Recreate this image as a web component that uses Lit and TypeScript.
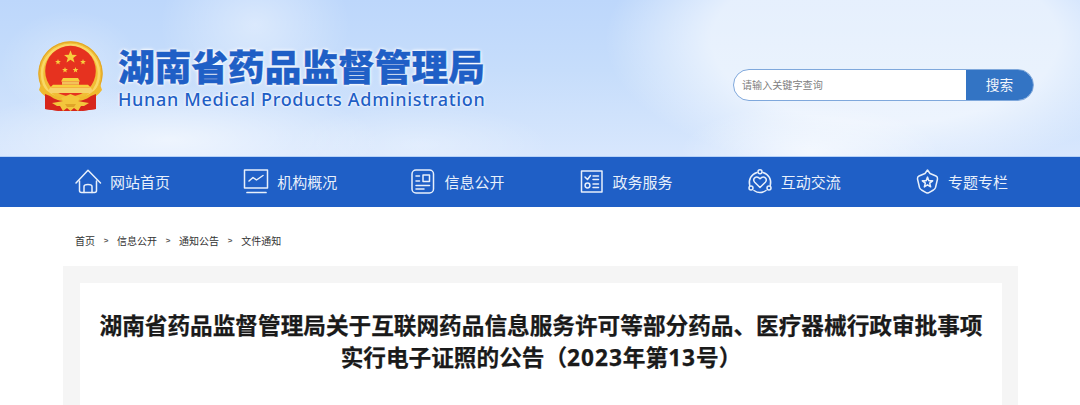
import { LitElement, html, css, svg } from "lit";
import { customElement } from "lit/decorators.js";

const star = (cx: number, cy: number, r: number, rot = 0) => {
  const pts: string[] = [];
  for (let i = 0; i < 10; i++) {
    const rad = i % 2 ? r * 0.42 : r;
    const a = ((-90 + rot + i * 36) * Math.PI) / 180;
    pts.push(`${(cx + rad * Math.cos(a)).toFixed(2)},${(cy + rad * Math.sin(a)).toFixed(2)}`);
  }
  return pts.join(" ");
};

const emblem = html`<svg class="emblem" viewBox="0 0 68 72" width="68" height="72">
  <path d="M8 50 L8 68 L23 70 L44 70 L59 68 L59 50 Z" fill="#d7261b"/>
  <circle cx="33.5" cy="32.5" r="32.2" fill="#f1bd35"/>
  <circle cx="33.5" cy="32.5" r="28.5" fill="none" stroke="#f9d866" stroke-width="2.5"/>
  <circle cx="33.5" cy="32.5" r="31.6" fill="none" stroke="#e0a428" stroke-width="1"/>
  <circle cx="33.5" cy="30" r="25.3" fill="#e6321f"/>
  <g fill="#f7cf3e">
    <polygon points="${star(33.5, 16, 6.8)}"/>
    <polygon points="${star(21, 21, 3)}"/>
    <polygon points="${star(46, 21, 3)}"/>
    <polygon points="${star(28, 29, 3)}"/>
    <polygon points="${star(38.5, 29, 3)}"/>
    <path d="M26 37 H41 L43 40.5 H24 Z"/>
    <rect x="25" y="40.5" width="17" height="3.2" fill="#f3c25a"/>
    <path d="M16 43.7 H51 L54 46.8 H13 Z"/>
    <path d="M13 46.8 H54 L57 52 H10 Z" fill="#f6d26a"/>
  </g>
  <path d="M4 43 C11 54 22 57 33.5 57 C45 57 56 54 63 43 L65 49 C58 59 46 61.5 33.5 61.5 C21 61.5 9 59 2 49 Z" fill="#efba2e"/>
  <path d="M8 53 L13 55 C18 59 24 60 27 60 L22 70 L8 68 Z" fill="#d7261b"/>
  <path d="M59 53 L54 55 C49 59 43 60 40 60 L45 70 L59 68 Z" fill="#d7261b"/>
  <path d="M24 57 L33.5 53 L43 57 L41 60 L46 61 L52 62 L47 65 L44 65 L41 70 L37 67 L33.5 70 L30 67 L26 70 L23 65 L20 65 L15 62 L21 61 L26 60 Z" fill="#f3c63c"/>
  <path d="M28 63 H39 L37 66 H30 Z" fill="#e0a428"/>
</svg>`;

const I = (w: number, h: number, body: unknown) =>
  html`<svg class="ic" width=${w} height=${h} viewBox="0 0 ${w} ${h}" fill="none" stroke="#e8f0fb" stroke-width="1.5" stroke-linecap="round" stroke-linejoin="round">${body}</svg>`;

const items = [
  {
    t: "网站首页",
    icon: I(26, 25, svg`<path d="M1 14 L13 1.2 L25.5 14"/><path d="M4.5 12 V21.5 Q4.5 23.5 6.5 23.5 H19.5 Q21.5 23.5 21.5 21.5 V12"/><path d="M9 23.5 V17.5 Q9 15.5 13 15.5 Q17 15.5 17 17.5 V23.5"/>`),
  },
  {
    t: "机构概况",
    icon: I(25, 25, svg`<rect x="1.5" y="1" width="23" height="18"/><path d="M6 12 L10 8.5 L13.5 11 L20 6.5"/><path d="M4 23.5 H23" stroke-width="1.7"/>`),
  },
  {
    t: "信息公开",
    icon: I(24, 25, svg`<rect x="1" y="1" width="21.5" height="23" rx="4"/><path d="M5 7 H8.5 M5 12 H8.5"/><rect x="12" y="6" width="6.5" height="6.5"/><path d="M5 16.5 H18.5 M5 20 H13"/>`),
  },
  {
    t: "政务服务",
    icon: I(24, 23, svg`<rect x="1.5" y="1" width="20.5" height="21"/><path d="M5 7 L7.5 9.5 L10.5 5.5"/><path d="M13 6 H18.5 M13 9.5 H18.5 M13 14 H18.5 M13 17.5 H18.5"/><circle cx="7.5" cy="15.5" r="2.4"/>`),
  },
  {
    t: "互动交流",
    icon: I(24, 26, svg`<path d="M9 3.5 A10.5 10.5 0 0 0 1.7 16.5"/><path d="M15 3.5 A10.5 10.5 0 0 1 22.3 16.5"/><path d="M6 21.5 A10.5 10.5 0 0 0 18 21.5"/><circle cx="12" cy="2.8" r="2"/><circle cx="3" cy="19" r="2"/><circle cx="21" cy="19" r="2"/><path d="M12 18.5 L6.7 13.2 Q4.7 10.8 6.7 8.8 Q9.3 6.8 12 9.8 Q14.7 6.8 17.3 8.8 Q19.3 10.8 17.3 13.2 Z"/>`),
  },
  {
    t: "专题专栏",
    icon: I(23, 25, svg`<path d="M11.5 1 L14 4.5 L20 7 Q21.8 7.8 21.5 10 L19.5 18.5 Q19 20 17.5 21 L12.5 23.8 Q11.5 24.2 10.5 23.8 L5.5 21 Q4 20 3.5 18.5 L1.5 10 Q1.2 7.8 3 7 L9 4.5 Z"/><polygon points="${star(11.5, 13.5, 5.4)}"/>`),
  },
];

@customElement("app-root")
export class AppRoot extends LitElement {
  static styles = css`
    :host {
      display: block;
      width: 1080px;
      height: 405px;
      overflow: hidden;
      background: #fff;
      font-family: "Open Sans", "Noto Sans CJK SC", "Noto Sans", sans-serif;
    }
    .head {
      height: 157px;
      display: flex;
      align-items: flex-start;
      box-sizing: border-box;
      padding: 41px 46px 0 37px;
      border-bottom: 1px solid #b6d2f8;
      background:
        radial-gradient(ellipse 130px 48px at 810px 152px, rgba(255,255,255,.62), transparent 100%),
        radial-gradient(ellipse 280px 135px at 885px 40px, rgba(255,255,255,.62) 62%, transparent 100%),
        radial-gradient(ellipse 95px 80px at 255px 25px, rgba(255,255,255,.42), transparent 100%),
        radial-gradient(ellipse 210px 55px at 170px 140px, rgba(255,255,255,.6), transparent 100%),
        radial-gradient(ellipse 70px 55px at 70px 65px, rgba(255,255,255,.28), transparent 100%),
        radial-gradient(ellipse 130px 40px at 420px 145px, rgba(255,255,255,.3), transparent 100%),
        linear-gradient(180deg, #bdd7fb 0%, #c6ddfb 45%, #d8e7fd 100%);
    }
    .emblem { flex: none; margin-right: 13px; }
    .brand { display: flex; flex-direction: column; width: 370px; margin-top: 2px; }
    .cn {
      font-family: "Noto Sans CJK SC", sans-serif;
      font-weight: 900;
      font-size: 36.7px;
      line-height: 44px;
      color: #1f5fc6;
      white-space: nowrap;
      -webkit-text-stroke: 0.4px #1f5fc6;
      text-shadow: 0 0 2px #fff, 0 0 3px #fff, 0 0 4px #fff;
    }
    .en {
      font-family: "Noto Sans", sans-serif;
      font-weight: 500;
      font-size: 18px;
      line-height: 24px;
      letter-spacing: 0.66px;
      color: #1f5fc6;
      white-space: nowrap;
      text-shadow: 0 0 2px #fff, 0 0 3px #fff;
    }
    .search {
      margin-left: auto;
      margin-top: 28px;
      width: 301px;
      height: 32px;
      box-sizing: border-box;
      display: flex;
      border: 1px solid #7fa8dc;
      border-radius: 16px;
      overflow: hidden;
      background: #fff;
    }
    .ph {
      flex: 1;
      padding-left: 8px;
      font-size: 10.1px;
      line-height: 30px;
      color: #808080;
    }
    .btn {
      width: 67px;
      background: #3374c4;
      color: #f2f6fc;
      font-size: 13.7px;
      line-height: 30px;
      text-align: center;
    }
    .nav {
      height: 50px;
      background: #1f5fc6;
      box-sizing: border-box;
      padding-left: 75px;
      display: flex;
    }
    .item {
      width: 168.2px;
      flex: none;
      display: flex;
      align-items: center;
      gap: 9px;
      color: #e8f0fb;
      font-size: 15px;
      white-space: nowrap;
      padding-bottom: 1px;
      box-sizing: border-box;
    }
    .ic { flex: none; overflow: visible; }
    .crumbs {
      height: 59px;
      box-sizing: border-box;
      padding: 27px 0 0 75px;
      display: flex;
      gap: 8.7px;
      font-size: 10px;
      line-height: 14px;
      color: #333;
    }
    .sep { font-family: "Liberation Sans", sans-serif; font-size: 8px; font-weight: 700; color: #555; }
    .panel {
      width: 955px;
      margin-left: 63px;
      box-sizing: border-box;
      padding: 17px 16px 0 17px;
      height: 139px;
      background: #f5f5f5;
    }
    .card {
      height: 122px;
      background: #fff;
      box-sizing: border-box;
      padding-top: 27px;
    }
    h1 {
      margin: 0;
      font-size: 22.65px;
      line-height: 32px;
      font-weight: 700;
      color: #1a1a1a;
      text-align: center;
      white-space: nowrap;
      -webkit-text-stroke: 0.25px #1a1a1a;
    }
    .num { letter-spacing: 1px; }
  `;

  render() {
    return html`
      <header class="head">
        ${emblem}
        <div class="brand">
          <div class="cn">湖南省药品监督管理局</div>
          <div class="en">Hunan Medical Products Administration</div>
        </div>
        <div class="search">
          <div class="ph">请输入关键字查询</div>
          <div class="btn">搜索</div>
        </div>
      </header>
      <nav class="nav">
        ${items.map((i) => html`<div class="item">${i.icon}<span>${i.t}</span></div>`)}
      </nav>
      <div class="crumbs">
        <span>首页</span><span class="sep">&gt;</span>
        <span>信息公开</span><span class="sep">&gt;</span>
        <span>通知公告</span><span class="sep">&gt;</span>
        <span>文件通知</span>
      </div>
      <section class="panel">
        <div class="card">
          <h1>湖南省药品监督管理局关于互联网药品信息服务许可等部分药品、医疗器械行政审批事项<br />实行电子证照的公告（<span class="num">2023</span>年第<span class="num">13</span>号）</h1>
        </div>
      </section>
    `;
  }
}
